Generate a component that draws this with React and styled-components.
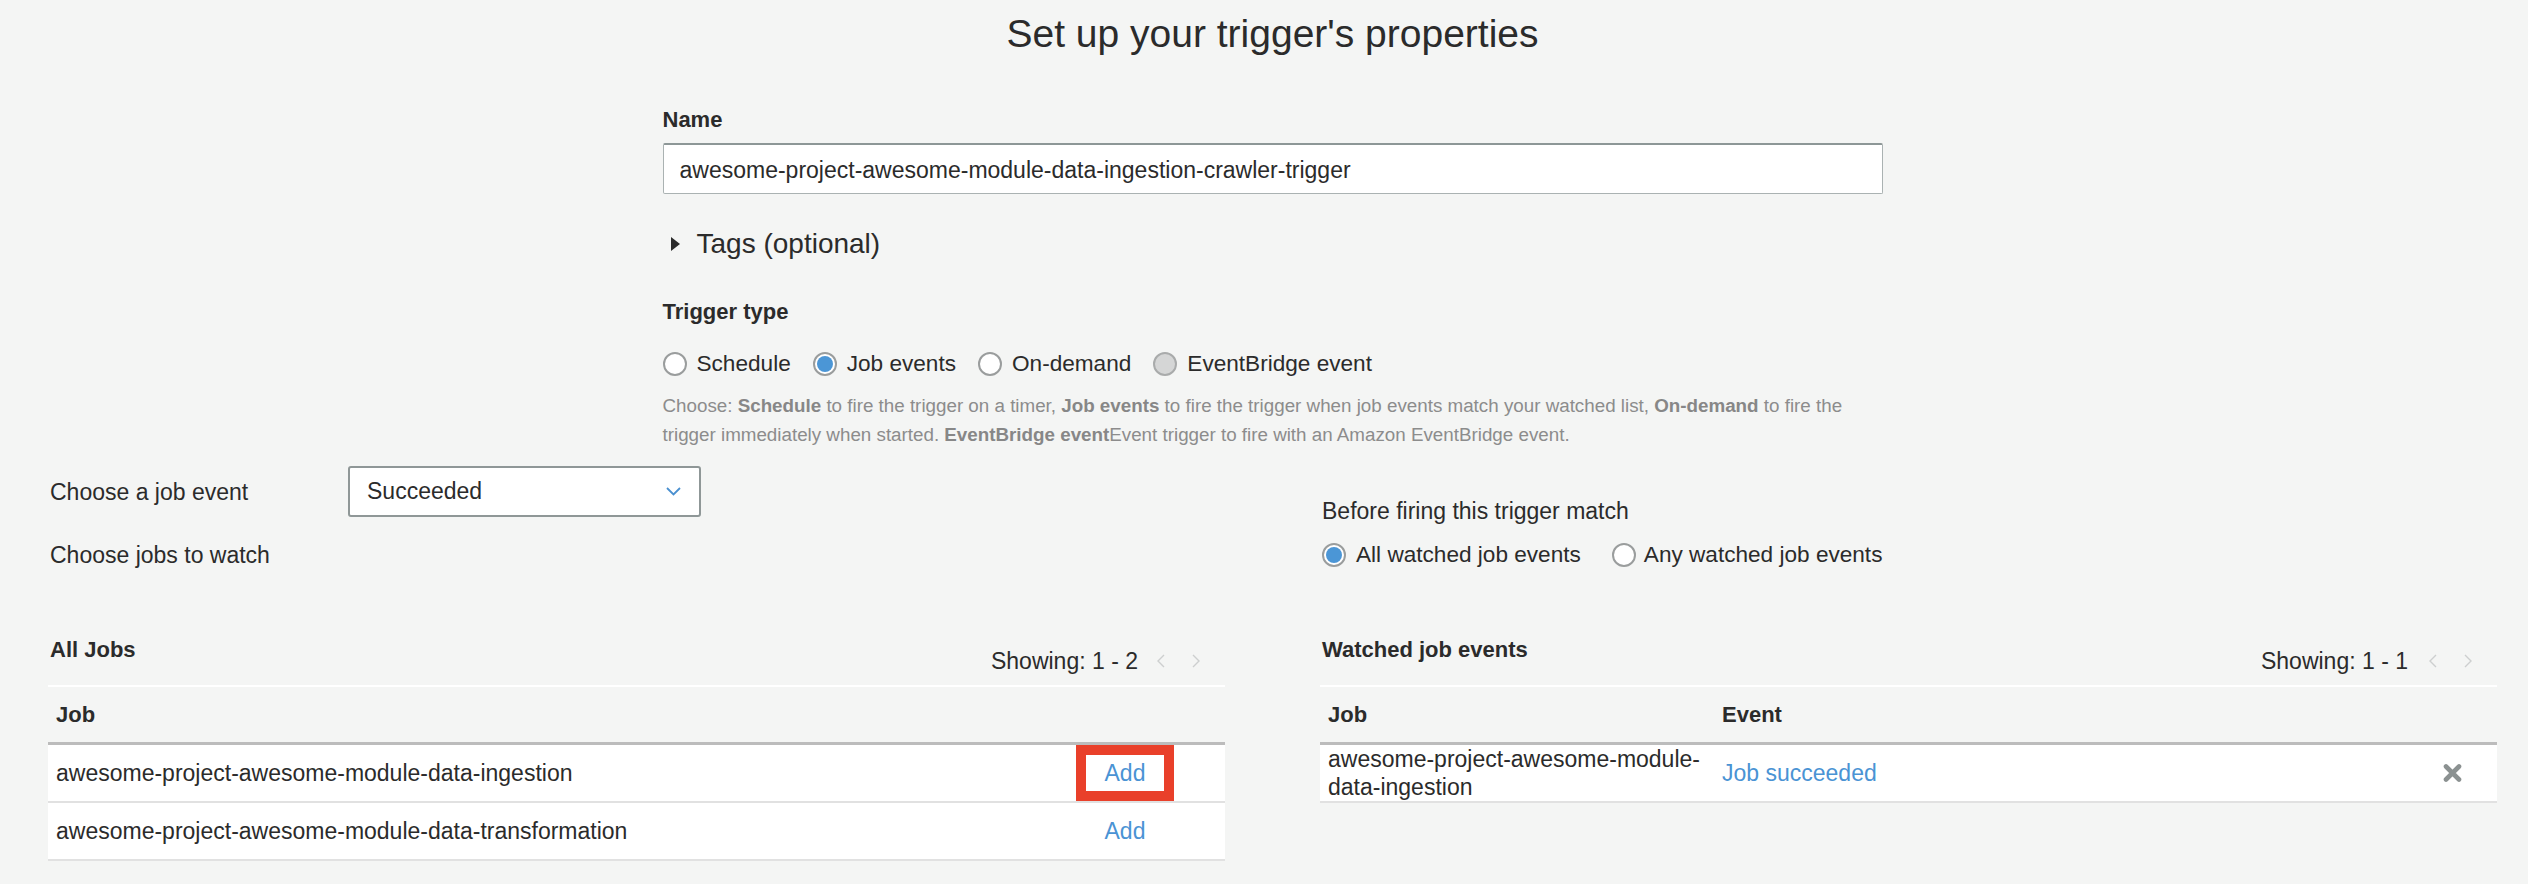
import React from "react";
import styled, { createGlobalStyle } from "styled-components";

const GlobalStyle = createGlobalStyle`
  html, body {
    margin: 0;
    padding: 0;
    background: #f4f5f4;
  }
  body {
    font-family: "Liberation Sans", Arial, Helvetica, sans-serif;
    color: #2e2e2e;
  }
  * { box-sizing: border-box; }
`;

const Page = styled.div`
  padding: 11px 31px 0 48px;
  min-height: 884px;
`;

const Title = styled.h1`
  margin: 0;
  font-size: 39px;
  line-height: 46px;
  font-weight: 400;
  text-align: center;
  color: #2b2b2b;
`;

const FormSection = styled.section`
  width: 1220px;
  margin: 0 auto;
  display: flex;
  flex-direction: column;
`;

const FieldLabel = styled.div`
  margin-top: ${(p) => p.$mt || 0}px;
  font-size: 22px;
  line-height: 26px;
  font-weight: 700;
  color: #2b2b2b;
`;

const TextInput = styled.input`
  margin-top: 10px;
  height: 51px;
  width: 100%;
  padding: 2px 16px 0;
  font: inherit;
  font-size: 23px;
  color: #2b2b2b;
  background: #fff;
  border: 1px solid #aab2b2;
  border-top: 2px solid #8d9797;
  border-radius: 2px;
  outline: none;
`;

const TagsToggle = styled.div`
  margin-top: 33px;
  display: flex;
  align-items: center;
  gap: 17px;
  height: 34px;
  padding-left: 8px;
  font-size: 28px;
  color: #2b2b2b;
`;

const RadioGroup = styled.div`
  margin-top: ${(p) => p.$mt || 0}px;
  display: flex;
  align-items: center;
  gap: ${(p) => p.$gap}px;
  height: 30px;
`;

const RadioOption = styled.label`
  display: flex;
  align-items: center;
  gap: ${(p) => p.$gap || 10}px;
  font-size: 22.6px;
  color: #2b2b2b;
`;

const RadioCircle = styled.span`
  position: relative;
  width: 24px;
  height: 24px;
  border-radius: 50%;
  border: 2px solid ${(p) => (p.$disabled ? "#a9abab" : "#9a9d9d")};
  background: ${(p) => (p.$disabled ? "#d5d6d6" : "#fff")};
  flex: none;
  &::after {
    content: "";
    display: ${(p) => (p.$checked ? "block" : "none")};
    position: absolute;
    inset: 2px;
    border-radius: 50%;
    background: #4b96d6;
  }
`;

const Description = styled.p`
  margin: 12px 0 0;
  font-size: 18.8px;
  line-height: 29px;
  color: #8c8c8c;
  b {
    font-weight: 700;
    color: #878787;
  }
`;

const Columns = styled.div`
  display: grid;
  grid-template-columns: 1fr 1fr;
  column-gap: 95px;
  margin-top: ${(p) => p.$mt}px;
`;

const SettingsBlock = styled.div`
  display: flex;
  flex-direction: column;
  padding-left: 2px;
  padding-top: ${(p) => p.$pt || 0}px;
`;

const SettingRow = styled.div`
  display: grid;
  grid-template-columns: 298px 353px;
  align-items: center;
  margin-top: ${(p) => p.$mt || 0}px;
`;

const SettingLabel = styled.div`
  font-size: 23px;
  line-height: 26px;
  color: #2b2b2b;
`;

const Select = styled.div`
  height: 51px;
  display: flex;
  align-items: center;
  justify-content: space-between;
  padding: 0 18px 0 17px;
  background: #fff;
  border: 2px solid #8f9797;
  border-radius: 3px;
  font-size: 23px;
  color: #2b2b2b;
`;

const TableBlock = styled.div`
  display: flex;
  flex-direction: column;
`;

const TableHeading = styled.div`
  display: flex;
  justify-content: space-between;
  align-items: flex-start;
  height: 48px;
  padding: 0 24px 0 2px;
`;

const TableTitle = styled.div`
  font-size: 22px;
  line-height: 26px;
  font-weight: 700;
  color: #2b2b2b;
`;

const Pagination = styled.div`
  margin-top: 11px;
  display: flex;
  align-items: center;
  font-size: 23px;
  line-height: 26px;
  color: #2b2b2b;
`;

const PageArrow = styled.svg`
  margin-left: ${(p) => p.$ml}px;
  width: 10px;
  height: 14px;
  display: block;
`;

const TableFrame = styled.div`
  border-top: 2px solid #ffffff;
`;

const HeaderRow = styled.div`
  display: grid;
  grid-template-columns: ${(p) => p.$cols};
  height: 58px;
  border-bottom: 3px solid #bcbcbc;
`;

const BodyRow = styled.div`
  display: grid;
  grid-template-columns: ${(p) => p.$cols};
  height: 58px;
  background: #fff;
  border-bottom: 2px solid #e1e1e1;
`;

const HeadCell = styled.div`
  display: flex;
  align-items: center;
  padding: 0 8px;
  font-size: 22px;
  font-weight: 700;
  color: #2b2b2b;
`;

const Cell = styled.div`
  display: flex;
  align-items: center;
  justify-content: ${(p) => p.$justify || "flex-start"};
  padding: 0 8px;
  font-size: 23px;
  line-height: 28px;
  color: #2b2b2b;
  overflow-wrap: break-word;
`;

const LinkText = styled.span`
  color: #4a93d4;
  font-size: 23px;
  cursor: pointer;
`;

const Highlight = styled.span`
  display: inline-flex;
  align-items: center;
  height: 56px;
  padding: 0 19px;
  border: 10px solid #e9402a;
`;

const ChevronDown = () => (
  <svg width="15" height="9" viewBox="0 0 15 9">
    <polyline points="1,1 7.5,7.5 14,1" fill="none" stroke="#4a90d0" strokeWidth="1.8" />
  </svg>
);

const Triangle = () => (
  <svg width="9" height="14" viewBox="0 0 9 14">
    <polygon points="0,0 9,7 0,14" fill="#2b2b2b" />
  </svg>
);

const Arrow = ({ dir, ml }) => (
  <PageArrow $ml={ml} viewBox="0 0 10 14">
    <polyline
      points={dir === "left" ? "8,1 2,7 8,13" : "2,1 8,7 2,13"}
      fill="none"
      stroke="#cdcfcf"
      strokeWidth="1.4"
    />
  </PageArrow>
);

const RemoveIcon = () => (
  <svg width="19" height="18" viewBox="0 0 19 18">
    <path d="M3 2.5 L16 15.5 M16 2.5 L3 15.5" stroke="#8b9191" strokeWidth="4.6" strokeLinecap="round" />
  </svg>
);

const Radio = ({ label, checked, disabled, gap }) => (
  <RadioOption $gap={gap}>
    <RadioCircle $checked={checked} $disabled={disabled} />
    {label}
  </RadioOption>
);

const jobs = [
  "awesome-project-awesome-module-data-ingestion",
  "awesome-project-awesome-module-data-transformation",
];

export default function App() {
  return (
    <>
      <GlobalStyle />
      <Page>
        <Title>Set up your trigger's properties</Title>
        <FormSection>
          <FieldLabel $mt={50}>Name</FieldLabel>
          <TextInput readOnly value="awesome-project-awesome-module-data-ingestion-crawler-trigger" />
          <TagsToggle>
            <Triangle />
            Tags (optional)
          </TagsToggle>
          <FieldLabel $mt={38}>Trigger type</FieldLabel>
          <RadioGroup $mt={24} $gap={22}>
            <Radio label="Schedule" />
            <Radio label="Job events" checked />
            <Radio label="On-demand" />
            <Radio label="EventBridge event" disabled />
          </RadioGroup>
          <Description>
            Choose: <b>Schedule</b> to fire the trigger on a timer, <b>Job events</b> to fire the trigger when job
            events match your watched list, <b>On-demand</b> to fire the trigger immediately when started.{" "}
            <b>EventBridge event</b>Event trigger to fire with an Amazon EventBridge event.
          </Description>
        </FormSection>

        <Columns $mt={17}>
          <SettingsBlock>
            <SettingRow>
              <SettingLabel>Choose a job event</SettingLabel>
              <Select>
                Succeeded
                <ChevronDown />
              </Select>
            </SettingRow>
            <SettingRow $mt={25}>
              <SettingLabel>Choose jobs to watch</SettingLabel>
            </SettingRow>
          </SettingsBlock>
          <SettingsBlock $pt={32}>
            <SettingLabel>Before firing this trigger match</SettingLabel>
            <RadioGroup $mt={16} $gap={31}>
              <Radio label="All watched job events" checked />
              <Radio label="Any watched job events" gap={8} />
            </RadioGroup>
          </SettingsBlock>
        </Columns>

        <Columns $mt={67}>
          <TableBlock>
            <TableHeading>
              <TableTitle>All Jobs</TableTitle>
              <Pagination>
                Showing: 1 - 2
                <Arrow dir="left" ml={18} />
                <Arrow dir="right" ml={25} />
              </Pagination>
            </TableHeading>
            <TableFrame>
              <HeaderRow $cols="1fr 200px">
                <HeadCell>Job</HeadCell>
                <HeadCell />
              </HeaderRow>
              {jobs.map((job, i) => (
                <BodyRow key={job} $cols="1fr 200px">
                  <Cell>{job}</Cell>
                  <Cell $justify="center">
                    {i === 0 ? (
                      <Highlight>
                        <LinkText>Add</LinkText>
                      </Highlight>
                    ) : (
                      <LinkText>Add</LinkText>
                    )}
                  </Cell>
                </BodyRow>
              ))}
            </TableFrame>
          </TableBlock>

          <TableBlock>
            <TableHeading>
              <TableTitle>Watched job events</TableTitle>
              <Pagination>
                Showing: 1 - 1
                <Arrow dir="left" ml={20} />
                <Arrow dir="right" ml={25} />
              </Pagination>
            </TableHeading>
            <TableFrame>
              <HeaderRow $cols="394px 1fr 90px">
                <HeadCell>Job</HeadCell>
                <HeadCell>Event</HeadCell>
                <HeadCell />
              </HeaderRow>
              <BodyRow $cols="394px 1fr 90px">
                <Cell>awesome-project-awesome-module-data-ingestion</Cell>
                <Cell>
                  <LinkText>Job succeeded</LinkText>
                </Cell>
                <Cell $justify="center">
                  <RemoveIcon />
                </Cell>
              </BodyRow>
            </TableFrame>
          </TableBlock>
        </Columns>
      </Page>
    </>
  );
}
